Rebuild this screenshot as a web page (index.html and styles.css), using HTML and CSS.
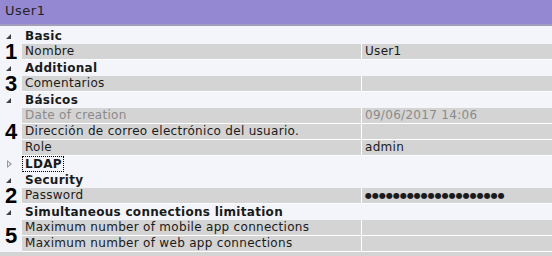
FILE: index.html
```html
<!DOCTYPE html>
<html lang="en">
<head>
    <link rel="stylesheet" href="styles.css">
    <title>User1</title>
</head>
<body>
    <div class="panel">
        <div class="title">User1</div>
        <div class="grid">
            <div class="category"><span class="arrow open"></span><span class="cat-name">Basic</span></div>
            <div class="group">
                <div class="mark">1</div>
                <div class="rows">
                    <div class="row"><div class="name">Nombre</div><div class="value">User1</div></div>
                </div>
            </div>

            <div class="category"><span class="arrow open"></span><span class="cat-name">Additional</span></div>
            <div class="group">
                <div class="mark">3</div>
                <div class="rows">
                    <div class="row"><div class="name">Comentarios</div><div class="value"></div></div>
                </div>
            </div>

            <div class="category"><span class="arrow open"></span><span class="cat-name">Básicos</span></div>
            <div class="group">
                <div class="mark">4</div>
                <div class="rows">
                    <div class="row readonly"><div class="name">Date of creation</div><div class="value">09/06/2017 14:06</div></div>
                    <div class="row"><div class="name">Dirección de correo electrónico del usuario.</div><div class="value"></div></div>
                    <div class="row"><div class="name">Role</div><div class="value">admin</div></div>
                </div>
            </div>

            <div class="category"><span class="arrow closed"></span><span class="cat-name focused">LDAP</span></div>

            <div class="category"><span class="arrow open"></span><span class="cat-name">Security</span></div>
            <div class="group">
                <div class="mark">2</div>
                <div class="rows">
                    <div class="row"><div class="name">Password</div><div class="value dots">●●●●●●●●●●●●●●●●●●●●</div></div>
                </div>
            </div>

            <div class="category"><span class="arrow open"></span><span class="cat-name">Simultaneous connections limitation</span></div>
            <div class="group">
                <div class="mark">5</div>
                <div class="rows">
                    <div class="row"><div class="name">Maximum number of mobile app connections</div><div class="value"></div></div>
                    <div class="row"><div class="name">Maximum number of web app connections</div><div class="value"></div></div>
                </div>
            </div>
        </div>
        <div class="footer"></div>
    </div>
</body>
</html>
```

FILE: styles.css
```css
body {
    margin: 0;
    background-color: #f3f5fb;
    font-family: "DejaVu Sans", Verdana, sans-serif;
    font-size: 12px;
    letter-spacing: 0.3px;
    color: #1a1a1a;
}

.panel {
    width: 552px;
    height: 256px;
    overflow: hidden;
}

.title {
    height: 24px;
    line-height: 22px;
    padding-left: 5px;
    background-color: #9488d3;
    border-bottom: 2px solid #a39dbd;
    font-size: 13px;
    letter-spacing: 0.5px;
    color: #222;
}

.grid {
    margin-top: 2px;
}

.category {
    height: 16px;
    display: flex;
    align-items: center;
}

.arrow {
    width: 22px;
    height: 16px;
    position: relative;
    flex: none;
}

.arrow.open::before {
    content: "";
    position: absolute;
    left: 6px;
    top: 6px;
    border-style: solid;
    border-width: 0 0 5px 5px;
    border-color: transparent transparent #404040 transparent;
}

.arrow.closed::before {
    content: "";
    position: absolute;
    left: 7px;
    top: 4px;
    width: 0;
    height: 0;
    border-style: solid;
    border-width: 4px 0 4px 5px;
    border-color: transparent transparent transparent #999;
}

.arrow.closed::after {
    content: "";
    position: absolute;
    left: 8px;
    top: 6px;
    border-style: solid;
    border-width: 2px 0 2px 2px;
    border-color: transparent transparent transparent #f3f5fb;
}

.cat-name {
    font-weight: bold;
    padding: 0 1px 0 3px;
    line-height: 14px;
}

.cat-name.focused {
    outline: 1px dotted #000;
    margin-left: 1px;
    padding-left: 2px;
}

.group {
    display: flex;
}

.mark {
    width: 22px;
    flex: none;
    display: flex;
    align-items: center;
    justify-content: center;
    font-family: "Liberation Sans", Arial, sans-serif;
    font-weight: bold;
    font-size: 22px;
    line-height: 14px;
    letter-spacing: 0;
    color: #000;
}

.rows {
    flex: 1;
}

.row {
    height: 15px;
    display: flex;
    background-color: #d4d4d4;
    border-bottom: 1px solid #fff;
    line-height: 15px;
}

.name {
    width: 336px;
    padding-left: 3px;
    border-right: 1px solid #fff;
    white-space: nowrap;
    overflow: hidden;
}

.value {
    flex: 1;
    padding-left: 3px;
    white-space: nowrap;
}

.readonly {
    color: #8a8a8a;
}

.dots {
    font-size: 8px;
    letter-spacing: 0;
}

.footer {
    height: 6px;
    background-color: #d4d4d4;
}
```
